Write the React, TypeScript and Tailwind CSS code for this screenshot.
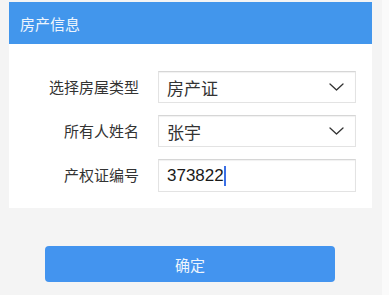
const font = { fontFamily: '"Noto Sans CJK SC", "Noto Sans", sans-serif' };

function Chevron() {
  return (
    <svg width="15" height="8" viewBox="0 0 15 8" fill="none" className="shrink-0">
      <polyline points="1,1 7.5,7 14,1" stroke="#333" strokeWidth="1.3" strokeLinecap="round" strokeLinejoin="round" />
    </svg>
  );
}

function SelectBox({ value }: { value: string }) {
  return (
    <div className="w-[198px] h-[32px] border border-[#e3e3e3] border-t-[#d6d6d6] bg-white flex items-center pl-[8px] pr-[11px] shadow-[inset_0_1px_1px_rgba(0,0,0,0.06)]">
      <span className="flex-1 text-[17px] text-[#333] leading-none">{value}</span>
      <Chevron />
    </div>
  );
}

export default function App() {
  const rows = [
    { label: "选择房屋类型", value: "房产证" },
    { label: "所有人姓名", value: "张宇" },
  ];

  return (
    <div className="w-[389px] h-[295px] bg-[#fafafa] overflow-hidden" style={font}>
      <div className="w-[382px] h-full bg-[#f4f4f4] pt-[2px]">
        {/* 面板 */}
        <div className="ml-[9px] w-[363px] bg-white">
          <div className="h-[42px] bg-[#4296ec] flex items-center pl-[11px]">
            <span className="text-[15px] text-[#eef5fd] leading-none">房产信息</span>
          </div>
          <div className="pt-[27px] pb-[16px] flex flex-col gap-[12px]">
            {rows.map((row) => (
              <div key={row.label} className="flex items-center">
                <div className="w-[130px] text-right text-[15px] text-[#333]">{row.label}</div>
                <div className="ml-[19px]">
                  <SelectBox value={row.value} />
                </div>
              </div>
            ))}
            <div className="flex items-center">
              <div className="w-[130px] text-right text-[15px] text-[#333]">产权证编号</div>
              <div className="ml-[19px] w-[198px] h-[33px] border border-[#e3e3e3] border-t-[#d6d6d6] bg-white flex items-center pl-[8px] shadow-[inset_0_1px_1px_rgba(0,0,0,0.06)]">
                <span className="text-[17px] text-[#1a1a1a] leading-none" style={{ fontFamily: '"Liberation Sans", sans-serif' }}>
                  373822
                </span>
                <span className="w-[2px] h-[20px] bg-[#3b6fe6]" />
              </div>
            </div>
          </div>
        </div>

        {/* 按钮 */}
        <div className="mt-[38px] ml-[45px] w-[290px] h-[36px] rounded-[4px] bg-[#4394ef] flex items-center justify-center">
          <span className="text-[15px] text-[#eef5fd] leading-none">确定</span>
        </div>
      </div>
    </div>
  );
}
